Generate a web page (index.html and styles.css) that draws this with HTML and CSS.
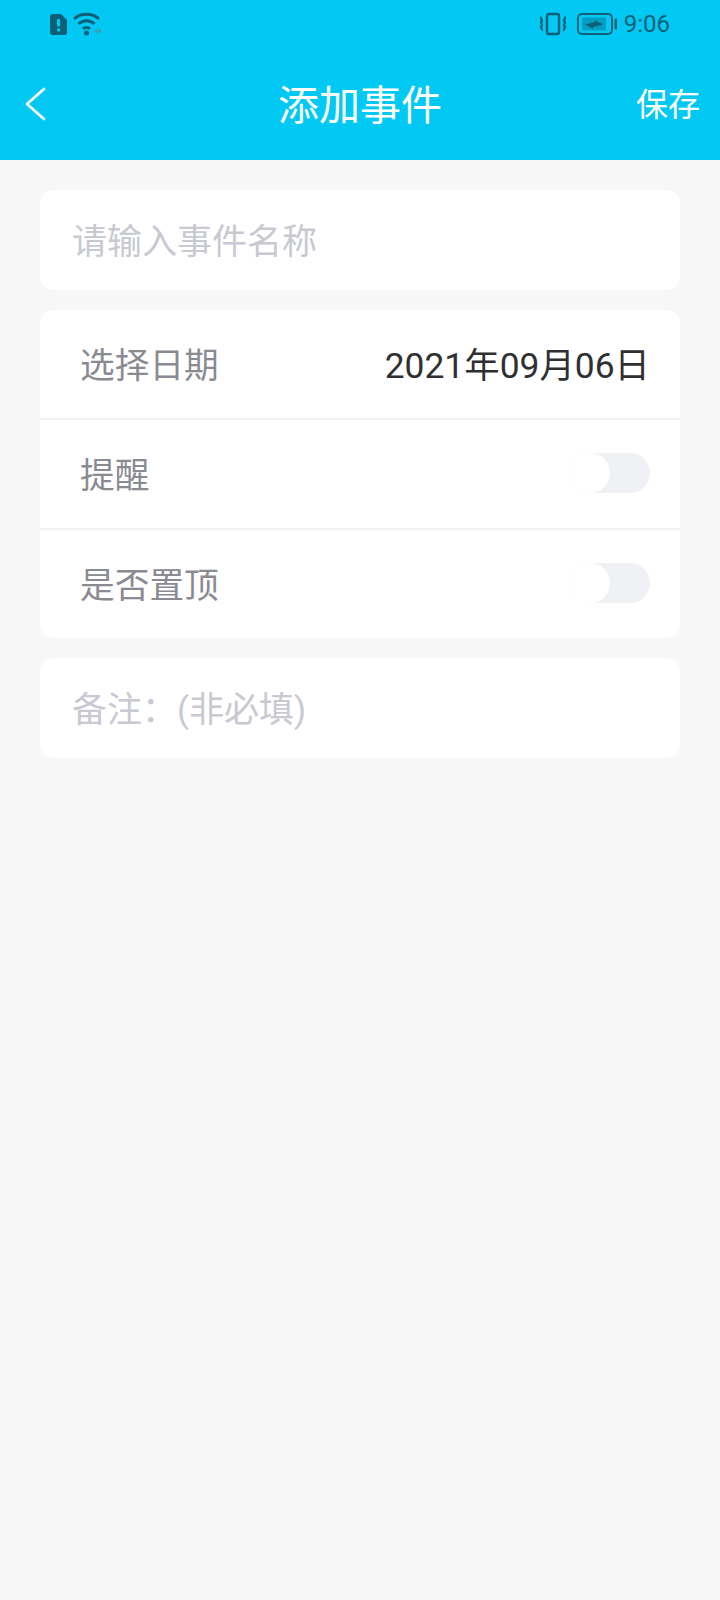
FILE: index.html
```html
<!DOCTYPE html>
<html lang="zh-CN">
<head>
<meta charset="utf-8">
<title>添加事件</title>
<link rel="stylesheet" href="styles.css">
</head>
<body>
<header class="header">
  <div class="status">
    <div class="status-left">
      <svg class="ic-sim" width="17" height="21" viewBox="0 0 17 21"><path d="M3 0h8l6 6v12a3 3 0 0 1-3 3H3a3 3 0 0 1-3-3V3a3 3 0 0 1 3-3z" fill="#0b6078"/><rect x="7" y="5" width="3.200" height="7.500" rx="1" fill="#02c9f3"/><rect x="7" y="14.500" width="3.200" height="3" rx="1" fill="#02c9f3"/></svg>
      <svg class="ic-wifi" width="30" height="24" viewBox="0 0 30 24" fill="none"><path d="M1 7C7.800 .8 19.200 .8 26 7" stroke="#0b6078" stroke-width="3"/><path d="M5.500 12c4.700-4.200 11.300-4.200 16 0" stroke="#0b6078" stroke-width="3"/><path d="M10 16.800c2-1.700 5-1.700 7 0" stroke="#0b6078" stroke-width="3"/><circle cx="13.500" cy="21" r="2.500" fill="#0b6078"/><path d="M21 19l3.500-3v6zM29 19l-3.500-3v6z" fill="#3a9cb5"/></svg>
    </div>
    <div class="status-right">
      <svg class="ic-vib" width="28" height="24" viewBox="0 0 28 24" fill="none"><rect x="8" y="2" width="12" height="20" rx="2" stroke="#0b6078" stroke-width="2.400"/><path d="M2.500 5c-2 1.500 2 3 0 4.500s2 3 0 4.500 2 3 0 4.500M25.500 5c2 1.500-2 3 0 4.500s-2 3 0 4.500-2 3 0 4.500" stroke="#0b6078" stroke-width="2.200"/></svg>
      <svg class="ic-bat" width="40" height="22" viewBox="0 0 40 22" fill="none"><rect x="1" y="1" width="34" height="20" rx="4" stroke="#0b6078" stroke-width="2"/><rect x="5" y="4.500" width="24" height="13" fill="#0b6078" opacity=".4"/><path d="M8 11.500l10-2.500 -.5-2 8.500 4.500-10 2.500 .5 2z" fill="#0b6078"/><rect x="37.500" y="5.500" width="2.500" height="11" rx="1" fill="#0b6078"/></svg>
      <span class="clock">9:06</span>
    </div>
  </div>
  <div class="nav">
    <svg class="back" width="21" height="34" viewBox="0 0 21 34" fill="none"><path d="M19 2L2 17l17 15" stroke="#fff" stroke-width="2.600" stroke-linecap="round" stroke-linejoin="round"/></svg>
    <h1 class="title">添加事件</h1>
    <span class="save">保存</span>
  </div>
</header>
<main class="content">
  <section class="card single"><span class="placeholder">请输入事件名称</span></section>
  <section class="card">
    <div class="row"><span class="label">选择日期</span><span class="date">2021年09月06日</span></div>
    <div class="row"><span class="label">提醒</span><span class="toggle"><span class="knob"></span></span></div>
    <div class="row last"><span class="label">是否置顶</span><span class="toggle"><span class="knob"></span></span></div>
  </section>
  <section class="card single"><span class="placeholder">备注：(非必填)</span></section>
</main>
</body>
</html>
```
FILE: styles.css
```css
* { box-sizing: border-box; }
html, body { margin: 0; padding: 0; }
body {
  width: 720px;
  height: 1600px;
  background: #f7f7f7;
  font-family: Roboto, "Noto Sans CJK SC", sans-serif;
  overflow: hidden;
}
.header {
  height: 160px;
  background: #02c9f3;
  display: flex;
  flex-direction: column;
}
.status {
  height: 48px;
  display: flex;
  justify-content: space-between;
  align-items: center;
  padding: 0 50px;
}
.status-left, .status-right { display: flex; align-items: center; }
.status-left { gap: 6px; }
.status-right { gap: 8px; }
.ic-vib { margin-right: 2px; }
.ic-bat { margin-right: -1px; }
.clock { font-size: 24px; color: #0b6078; line-height: 28px; }
.nav {
  flex: 1;
  display: grid;
  grid-template-columns: 1fr auto 1fr;
  align-items: center;
  padding: 2px 20px 0;
}
.back { justify-self: start; margin: 0 0 2px 5px; }
.title {
  margin: 2px 0 0;
  font-size: 41px;
  font-weight: 400;
  color: #fff;
  line-height: 50px;
}
.save { justify-self: end; font-size: 32px; color: #fff; line-height: 44px; }
.content {
  padding: 30px 40px;
  display: flex;
  flex-direction: column;
  gap: 20px;
}
.card {
  background: #fff;
  border-radius: 14px;
  overflow: hidden;
}
.single {
  height: 100px;
  display: flex;
  align-items: center;
  padding: 0 0 4px 32px;
}
.placeholder { font-size: 35px; color: #c8c9d2; }
.row {
  height: 110px;
  display: flex;
  justify-content: space-between;
  align-items: center;
  padding: 0 30px 2px 40px;
  border-bottom: 2px solid #f1f2f6;
}
.row.last { border-bottom: 0; height: 108px; }
.label { font-size: 34.700px; color: #8a8b92; }
.date { font-size: 35.400px; color: #303033; margin-bottom: 2px; }
.toggle {
  width: 80px;
  height: 40px;
  border-radius: 20px;
  background: #f0f1f5;
  position: relative;
  display: block;
}
.knob {
  position: absolute;
  left: 0;
  top: 0;
  width: 40px;
  height: 40px;
  border-radius: 50%;
  background: #fff;
}
```
